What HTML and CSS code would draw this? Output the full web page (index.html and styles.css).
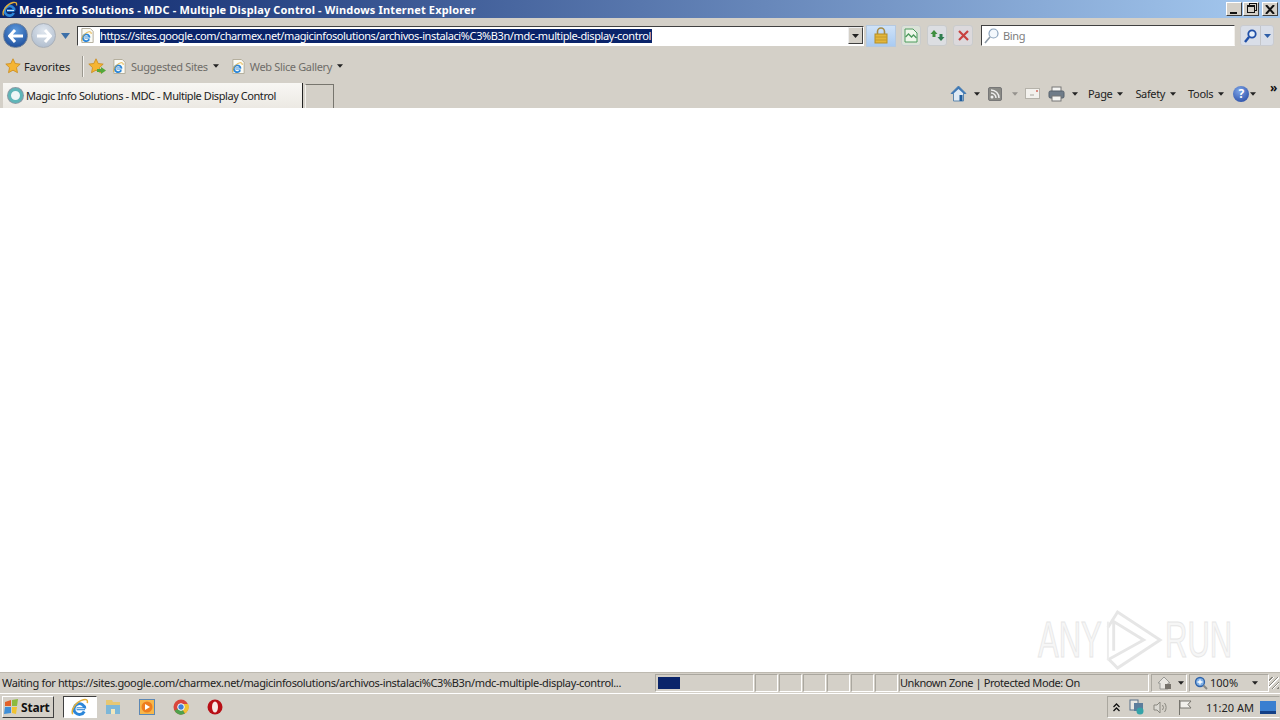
FILE: index.html
```html
<!DOCTYPE html>
<html lang="en">
<head>
  <meta charset="UTF-8">
  <title>Magic Info Solutions - MDC - Multiple Display Control</title>
  <link rel="stylesheet" href="styles.css">
</head>
<body>
  <svg class="defs" width="0" height="0">
    <symbol id="ie" viewBox="0 0 16 16">
      <path d="M12.500 9.500H5M12.300 9.500A4.800 4.800 0 1 0 11.800 12" fill="none" stroke="#2b86d9" stroke-width="2.600"/>
      <path d="M5 9.500h7" stroke="#fff" stroke-width=".8"/>
      <path d="M1.500 14.500C-.5 10 5 3 11 1.500c3-.7 4 .5 3.500 3" fill="none" stroke="#e2ae3a" stroke-width="1.300"/>
    </symbol>
    <symbol id="iepage" viewBox="0 0 16 16">
      <path d="M2 .5h9l3 3v12H2z" fill="#fbfbf5" stroke="#b0aa98"/>
      <use href="#ie" x="1" y="3" width="12" height="12"/>
    </symbol>
    <symbol id="star" viewBox="0 0 16 16">
      <path d="M8 .8l2.200 4.700 5 .6-3.700 3.500 1 5.100L8 12.200l-4.500 2.500 1-5.100L.8 6.100l5-.6z" fill="#f5b533" stroke="#c98a1c" stroke-width=".8"/>
    </symbol>
    <symbol id="caret" viewBox="0 0 7 4">
      <path d="M0 0h7L3.500 4z" fill="#222"/>
    </symbol>
  </svg>

  <div class="titlebar">
    <svg class="title-ie"><use href="#ie"/></svg>
    <span class="title-text">Magic Info Solutions - MDC - Multiple Display Control - Windows Internet Explorer</span>
    <div class="win-btns">
      <span class="win-btn"><i class="win-min"></i></span>
      <span class="win-btn"><i class="win-restore"></i></span>
      <span class="win-btn win-close">
        <svg width="10" height="9" viewBox="0 0 10 9"><path d="M1 0l8 9M9 0L1 9" stroke="#111" stroke-width="2"/></svg>
      </span>
    </div>
  </div>

  <div class="addressrow">
    <span class="nav-btn nav-back">
      <svg width="16" height="14" viewBox="0 0 16 14"><path d="M7 1L1.500 7 7 13M2 7h13" fill="none" stroke="#fff" stroke-width="3"/></svg>
    </span>
    <span class="nav-btn nav-forward">
      <svg width="16" height="14" viewBox="0 0 16 14"><path d="M9 1l5.500 6L9 13M14 7H1" fill="none" stroke="#fff" stroke-width="3"/></svg>
    </span>
    <svg class="nav-drop" viewBox="0 0 9 6"><path d="M0 0h9L4.500 6z" fill="#3c6fa8"/></svg>
    <div class="addressbox">
      <svg class="addr-icon"><use href="#iepage"/></svg>
      <span class="addr-url">https://sites.google.com/charmex.net/magicinfosolutions/archivos-instalaci%C3%B3n/mdc-multiple-display-control</span>
      <span class="combo-btn"><svg width="7" height="4"><use href="#caret"/></svg></span>
    </div>
    <span class="lock-btn">
      <svg width="14" height="17" viewBox="0 0 14 17">
        <path d="M3.500 8V4.500a3.500 3.500 0 0 1 7 0V8" fill="none" stroke="#a58b45" stroke-width="1.600"/>
        <rect x="1" y="7" width="12" height="9" fill="#e3b73c" stroke="#b58e26"/>
        <path d="M1 10h12M1 13h12" stroke="#c49a2c"/>
      </svg>
    </span>
    <span class="tool-btn tool-compat">
      <svg width="14" height="15" viewBox="0 0 14 15">
        <path d="M1 1h8l4 4v9H1z" fill="#eef7ea" stroke="#4c9a5c"/>
        <path d="M1.500 9l3-3 3 3 2-2 3 3" fill="none" stroke="#4c9a5c" stroke-width="1.300"/>
      </svg>
    </span>
    <span class="tool-btn">
      <svg width="15" height="13" viewBox="0 0 15 13">
        <path d="M4 1L.5 5h2v3h3V5h2z" fill="#3f8f3f"/>
        <path d="M11 12l3.500-4h-2V5h-3v3h-2z" fill="#2f7d4f"/>
      </svg>
    </span>
    <span class="tool-btn tool-stop">
      <svg width="11" height="11" viewBox="0 0 11 11"><path d="M1 1l9 9M10 1l-9 9" stroke="#c8423f" stroke-width="2.200"/></svg>
    </span>
    <div class="searchbox">
      <svg width="15" height="16" viewBox="0 0 15 16">
        <circle cx="9.500" cy="5.500" r="4.500" fill="#f4f8fc" stroke="#8ba3bd" stroke-width="1.200"/>
        <path d="M6 9l-5 6" stroke="#8d9aa6" stroke-width="1.600"/>
      </svg>
      <span class="search-text">Bing</span>
    </div>
    <span class="search-btn">
      <span class="search-go">
        <svg width="13" height="14" viewBox="0 0 13 14">
          <circle cx="8" cy="5" r="3.700" fill="#e4eefa" stroke="#1f4fa8" stroke-width="1.800"/>
          <path d="M5 8l-4 5" stroke="#1f4fa8" stroke-width="2.400"/>
        </svg>
      </span>
      <span class="search-drop"><svg width="7" height="4" viewBox="0 0 7 4"><path d="M0 0h7L3.500 4z" fill="#2f5fa8"/></svg></span>
    </span>
  </div>

  <div class="favrow">
    <svg class="fav-star"><use href="#star"/></svg>
    <span class="fav-label">Favorites</span>
    <span class="fav-sep"></span>
    <span class="fav-add">
      <svg width="16" height="16"><use href="#star"/></svg>
      <svg class="fav-arrow" width="9" height="7" viewBox="0 0 9 7"><path d="M0 2h4V0l5 3.500L4 7V5H0z" fill="#55a83a"/></svg>
    </span>
    <svg class="fav-page"><use href="#iepage"/></svg>
    <span class="fav-link">Suggested Sites</span>
    <svg class="caret fav-caret"><use href="#caret"/></svg>
    <svg class="fav-page fav-page-2"><use href="#iepage"/></svg>
    <span class="fav-link">Web Slice Gallery</span>
    <svg class="caret fav-caret"><use href="#caret"/></svg>
  </div>

  <div class="tabrow">
    <div class="tab">
      <span class="tab-spinner"></span>
      <span class="tab-title">Magic Info Solutions - MDC - Multiple Display Control</span>
    </div>
    <div class="new-tab"></div>
    <div class="commands">
      <svg class="cmd-icon" width="17" height="17" viewBox="0 0 17 17">
        <path d="M8.500 1L1 8.500h2.500V16h10V8.500H16z" fill="#dfeaf4" stroke="#5d86ad"/>
        <path d="M8.500 1L1 8.500l2 .5 5.500-5 5.500 5 2-.5z" fill="#3f78b4"/>
        <rect x="9.500" y="10" width="3" height="6" fill="#1f5c9c"/>
      </svg>
      <svg class="caret cmd-caret"><use href="#caret"/></svg>
      <svg class="cmd-icon cmd-feed" width="14" height="14" viewBox="0 0 14 14">
        <rect x=".5" y=".5" width="13" height="13" rx="1.500" fill="#8a8a86" stroke="#777"/>
        <circle cx="4" cy="10" r="1.500" fill="#eee"/>
        <path d="M3 6a5 5 0 0 1 5 5M3 3a8 8 0 0 1 8 8" fill="none" stroke="#eee" stroke-width="1.500"/>
      </svg>
      <svg class="caret cmd-caret cmd-off"><use href="#caret"/></svg>
      <svg class="cmd-icon cmd-mail" width="15" height="11" viewBox="0 0 15 11">
        <rect x=".5" y=".5" width="14" height="10" fill="#f3f1ed" stroke="#b5b2aa"/>
        <path d="M5 7h4" stroke="#a9a69f"/>
        <rect x="11" y="2" width="2" height="2" fill="#d98a80"/>
      </svg>
      <svg class="cmd-icon cmd-print" width="17" height="16" viewBox="0 0 17 16">
        <rect x="4" y="1" width="9" height="5" fill="#f4f4f2" stroke="#777"/>
        <rect x="1" y="5" width="15" height="7" rx="1.500" fill="#6f7c89" stroke="#56616c"/>
        <rect x="4" y="10" width="9" height="5" fill="#f4f4f2" stroke="#777"/>
      </svg>
      <svg class="caret cmd-caret"><use href="#caret"/></svg>
      <span class="cmd-label">Page</span>
      <svg class="caret cmd-caret-text"><use href="#caret"/></svg>
      <span class="cmd-label">Safety</span>
      <svg class="caret cmd-caret-text"><use href="#caret"/></svg>
      <span class="cmd-label">Tools</span>
      <svg class="caret cmd-caret-text"><use href="#caret"/></svg>
      <span class="cmd-help">?</span>
      <svg class="caret cmd-help-caret"><use href="#caret"/></svg>
      <span class="cmd-more">»</span>
    </div>
  </div>

  <main class="content">
    <div class="watermark">
      <span class="wm-word">ANY</span>
      <svg class="wm-mark" width="58" height="62" viewBox="0 0 60 62">
        <path d="M3 18L13 2l44 29-44 29-9-9 36-20L9 12v30" fill="none" stroke="#e6e6e6" stroke-width="3"/>
        <path d="M3 12v40" stroke="#ececec" stroke-width="2"/>
      </svg>
      <span class="wm-word">RUN</span>
    </div>
  </main>

  <div class="statusbar">
    <span class="st-cell st-main">Waiting for https://sites.google.com/charmex.net/magicinfosolutions/archivos-instalaci%C3%B3n/mdc-multiple-display-control...</span>
    <span class="st-cell st-progress"><i class="progress-fill" style="width: 22px"></i></span>
    <span class="st-cell st-small"></span>
    <span class="st-cell st-small"></span>
    <span class="st-cell st-small"></span>
    <span class="st-cell st-small"></span>
    <span class="st-cell st-small"></span>
    <span class="st-cell st-small"></span>
    <span class="st-cell st-zone">Unknown Zone | Protected Mode: On</span>
    <span class="st-cell st-security">
      <svg width="16" height="14" viewBox="0 0 16 14">
        <path d="M7 1L1 7h2v6h8V7h2z" fill="#e9e7e2" stroke="#9a9a96"/>
        <rect x="8" y="8" width="6" height="5" fill="#77736c"/>
      </svg>
      <svg class="caret"><use href="#caret"/></svg>
    </span>
    <span class="st-cell st-zoom">
      <svg width="14" height="14" viewBox="0 0 14 14">
        <circle cx="6" cy="6" r="4.500" fill="#7fb0e6" stroke="#2f62a8" stroke-width="1.300"/>
        <path d="M3.500 6h5M6 3.500v5" stroke="#fff" stroke-width="1.300"/>
        <path d="M9.500 9.500L13 13" stroke="#8a8a86" stroke-width="2"/>
      </svg>
      <span class="zoom-text">100%</span>
      <svg class="caret zoom-caret"><use href="#caret"/></svg>
    </span>
    <span class="st-grip"></span>
  </div>

  <div class="taskbar">
    <span class="start-btn">
      <svg width="16" height="16" viewBox="0 0 16 16">
        <path d="M1 3l6-2v6H1z" fill="#e2622a"/>
        <path d="M8 1l6-1-1 7H8z" fill="#8cba3f"/>
        <path d="M1 8h6v6l-7 1z" fill="#3f8fd8"/>
        <path d="M8 8h5l-1 7-4-1z" fill="#f0c331"/>
      </svg>
      <span class="start-text">Start</span>
    </span>
    <span class="task-btn task-active"><svg width="18" height="18"><use href="#ie"/></svg></span>
    <span class="task-btn">
      <svg width="16" height="16" viewBox="0 0 16 16">
        <path d="M1 1h6l1 2h7v12H1z" fill="#e7c772"/>
        <path d="M1 6h14v9H1z" fill="#7db7d8"/>
        <rect x="6" y="10" width="4" height="5" fill="#f2e7bd"/>
      </svg>
    </span>
    <span class="task-btn">
      <svg width="16" height="16" viewBox="0 0 16 16">
        <rect x=".5" y=".5" width="15" height="15" fill="#f7b74a" stroke="#5c87b4"/>
        <circle cx="8" cy="8" r="5.500" fill="#ee7d1e"/>
        <path d="M6 5l5 3-5 3z" fill="#fff"/>
      </svg>
    </span>
    <span class="task-btn">
      <svg width="16" height="16" viewBox="0 0 16 16">
        <circle cx="8" cy="8" r="7.500" fill="#d9463c"/>
        <path d="M8 8L1.500 11.800A7.500 7.500 0 0 0 12 14.500z" fill="#4fa14b"/>
        <path d="M8 8l4 6.500A7.500 7.500 0 0 0 15.200 5H8z" fill="#f1c232"/>
        <circle cx="8" cy="8" r="3.300" fill="#3f7fd8" stroke="#fff"/>
      </svg>
    </span>
    <span class="task-btn">
      <svg width="16" height="16" viewBox="0 0 16 16">
        <circle cx="8" cy="8" r="7.500" fill="#b80f16"/>
        <ellipse cx="8" cy="8" rx="3" ry="5.500" fill="#f7e9e6"/>
      </svg>
    </span>
    <div class="tray">
      <span class="tray-up">
        <svg width="7" height="9" viewBox="0 0 7 9"><path d="M.5 4l3-3 3 3M.5 8l3-3 3 3" fill="none" stroke="#111" stroke-width="1.300"/></svg>
      </span>
      <svg class="tray-icon" width="16" height="16" viewBox="0 0 16 16">
        <rect x="1" y="1" width="8" height="10" fill="#e9e7e2" stroke="#59708a"/>
        <rect x="5" y="4" width="9" height="8" fill="#5c7d9c"/>
        <circle cx="11" cy="12" r="3.500" fill="#36a3a8"/>
      </svg>
      <svg class="tray-icon" width="16" height="15" viewBox="0 0 16 15">
        <path d="M1 5h3l3-3v11l-3-3H1z" fill="#dcdad4" stroke="#8a8880"/>
        <path d="M9.500 5a4 4 0 0 1 0 5M11.500 3a7 7 0 0 1 0 9" fill="none" stroke="#8a8880"/>
      </svg>
      <svg class="tray-icon tray-flag" width="15" height="15" viewBox="0 0 15 15">
        <path d="M1.500 0v15" stroke="#77756e"/>
        <path d="M2 1h11l-3 3.500L13 8H2z" fill="#f2f0ec" stroke="#77756e"/>
      </svg>
      <span class="clock">11:20 AM</span>
      <svg class="tray-desktop" width="16" height="13" viewBox="0 0 16 13">
        <rect width="16" height="13" fill="#3a7fd0"/>
        <rect y="10" width="16" height="3" fill="#123f86"/>
      </svg>
    </div>
  </div>
</body>
</html>
```

FILE: styles.css
```css
* {
  box-sizing: border-box;
  margin: 0;
  padding: 0;
}

html,
body {
  height: 100%;
  overflow: hidden;
}

body {
  font-family: "Noto Sans", Arial, sans-serif;
  font-size: 11px;
  letter-spacing: -0.35px;
  color: #222;
  background: #d4d0c8;
  display: flex;
  flex-direction: column;
}

.defs {
  position: absolute;
}

svg {
  display: block;
  flex-shrink: 0;
}

/* Title bar */
.titlebar {
  height: 18px;
  display: flex;
  align-items: center;
  padding-left: 2px;
  background: linear-gradient(to right, #0a246a, #a6caf0);
}

.title-ie {
  width: 16px;
  height: 16px;
}

.title-text {
  margin-left: 1px;
  color: #fff;
  font-weight: 700;
  letter-spacing: 0.15px;
  white-space: nowrap;
}

.win-btns {
  margin-left: auto;
  margin-right: 2px;
  display: flex;
}

.win-btn {
  width: 16px;
  height: 14px;
  margin-left: 1px;
  background: #d4d0c8;
  border: 1px solid;
  border-color: #fff #404040 #404040 #fff;
  display: flex;
  align-items: center;
  justify-content: center;
}

.win-close {
  margin-left: 3px;
}

.win-min {
  width: 7px;
  height: 2px;
  background: #111;
  margin-top: 7px;
  margin-right: 2px;
}

.win-restore {
  width: 8px;
  height: 8px;
  border: 1px solid #111;
  border-top-width: 2px;
  background: #d4d0c8;
  box-shadow: 2px -2px 0 -1px #d4d0c8, 2px -2px 0 0 #111;
}

/* Address row */
.addressrow {
  height: 32px;
  display: flex;
  align-items: center;
  padding: 3px 0 0 3px;
}

.nav-btn {
  width: 25px;
  height: 25px;
  border-radius: 50%;
  display: flex;
  align-items: center;
  justify-content: center;
}

.nav-back {
  background: radial-gradient(circle at 50% 30%, #5f9de0, #13408f);
  border: 1px solid #6c7f99;
}

.nav-forward {
  margin-left: 3px;
  background: radial-gradient(circle at 50% 30%, #dfe6ee, #a9b7c9);
  border: 1px solid #aab0b8;
}

.nav-drop {
  width: 9px;
  height: 6px;
  margin-left: 5px;
}

.addressbox {
  width: 787px;
  height: 20px;
  margin-left: 7px;
  background: #fff;
  border: 1px solid;
  border-color: #404040 #fff #fff #404040;
  display: flex;
  align-items: center;
  padding-left: 2px;
}

.addr-icon {
  width: 15px;
  height: 15px;
}

.addr-url {
  margin-left: 5px;
  padding-right: 1px;
  height: 14px;
  line-height: 14px;
  letter-spacing: -0.39px;
  background: #0a246a;
  color: #fff;
  white-space: nowrap;
}

.combo-btn {
  margin-left: auto;
  width: 15px;
  height: 17px;
  background: #d4d0c8;
  border: 1px solid;
  border-color: #eee #404040 #404040 #eee;
  display: flex;
  align-items: center;
  justify-content: center;
}

.lock-btn {
  width: 30px;
  height: 22px;
  margin-left: 2px;
  background: linear-gradient(#cfe2f8, #a9cbf2);
  border: 1px solid #b5c9e0;
  display: flex;
  align-items: center;
  justify-content: center;
}

.tool-btn {
  width: 20px;
  height: 21px;
  margin-left: 6px;
  background: #dcdee2;
  border: 1px solid #c9cbcc;
  border-radius: 3px;
  display: flex;
  align-items: center;
  justify-content: center;
}

.tool-compat {
  background: #dbe2d8;
  margin-left: 5px;
}

.tool-stop {
  background: #dcd9dc;
}

.searchbox {
  width: 254px;
  height: 21px;
  margin-left: 8px;
  background: #fff;
  border: 1px solid;
  border-color: #404040 #f2f0ec #fff #404040;
  display: flex;
  align-items: center;
  padding-left: 2px;
}

.search-text {
  margin-left: 4px;
  color: #7d7d7d;
}

.search-btn {
  width: 34px;
  height: 21px;
  margin-left: 5px;
  display: flex;
  background: #d9dee8;
  border: 1px solid #c9cbd0;
  border-radius: 3px;
}

.search-go {
  width: 20px;
  display: flex;
  align-items: center;
  justify-content: center;
  border-right: 1px solid #c4c6ca;
}

.search-drop {
  flex: 1;
  display: flex;
  align-items: center;
  justify-content: center;
}

/* Favorites row */
.favrow {
  height: 32px;
  display: flex;
  align-items: center;
  padding-left: 5px;
}

.fav-star {
  width: 16px;
  height: 16px;
}

.fav-label {
  margin-left: 3px;
  letter-spacing: -0.1px;
}

.fav-sep {
  width: 1px;
  height: 21px;
  margin-left: 12px;
  background: #9b988f;
  box-shadow: 1px 0 0 #f4f2ee;
}

.fav-add {
  margin-left: 5px;
  width: 17px;
  height: 16px;
  position: relative;
}

.fav-arrow {
  position: absolute;
  right: -1px;
  bottom: 0;
}

.fav-page {
  width: 15px;
  height: 15px;
  margin-left: 7px;
}

.fav-page-2 {
  margin-left: 12px;
}

.fav-link {
  margin-left: 4px;
  color: #6f6d68;
}

.caret {
  width: 6px;
  height: 4px;
}

.fav-caret {
  margin-left: 5px;
}

/* Tab row */
.tabrow {
  height: 26px;
  display: flex;
  align-items: flex-end;
  padding-left: 3px;
}

.tab {
  width: 300px;
  height: 25px;
  display: flex;
  align-items: center;
  padding-left: 5px;
  background: linear-gradient(#f8f7f4, #ece9e3);
  border-right: 1px solid #222;
}

.tab-spinner {
  width: 15px;
  height: 15px;
  border-radius: 50%;
  border: 3px solid #5fb5b8;
  background: #eef6f6;
  box-shadow: 0 0 0 1px #8b9aa5;
}

.tab-title {
  margin-left: 3px;
  letter-spacing: -0.43px;
  white-space: nowrap;
}

.new-tab {
  width: 29px;
  height: 24px;
  margin-left: 2px;
  border: 1px solid #77756e;
  border-bottom: 0;
  border-left-color: #f4f2ee;
}

.commands {
  margin-left: auto;
  width: 330px;
  height: 26px;
  display: flex;
  align-items: center;
  padding-bottom: 3px;
  position: relative;
}

.cmd-caret {
  margin-left: 7px;
}

.cmd-off {
  opacity: .35;
  margin-left: 10px;
}

.cmd-feed {
  margin-left: 8px;
}

.cmd-mail {
  margin-left: 7px;
}

.cmd-print {
  margin-left: 8px;
}

.cmd-label {
  margin-left: 10px;
}

.cmd-caret-text {
  margin-left: 5px;
  margin-right: 2px;
}

.cmd-help {
  margin-left: 7px;
  width: 16px;
  height: 16px;
  border-radius: 50%;
  background: radial-gradient(circle at 40% 30%, #7fa6e8, #1b3f9c);
  color: #fff;
  font-weight: 700;
  font-size: 12px;
  line-height: 16px;
  text-align: center;
}

.cmd-help-caret {
  margin-left: 1px;
}

.cmd-more {
  position: absolute;
  right: 3px;
  top: 0;
  font-size: 12px;
  line-height: 12px;
  color: #111;
  font-weight: 700;
}

/* Page area */
.content {
  flex: 1;
  background: #fff;
  position: relative;
}

.watermark {
  position: absolute;
  left: 1038px;
  top: 501px;
  display: flex;
  align-items: center;
}

.wm-mark {
  margin: 0 2px 0 2px;
}

.wm-word {
  width: 65px;
  color: #f6f6f6;
  -webkit-text-stroke: 1px #e6e6e6;
  font-family: "Liberation Sans", Arial, sans-serif;
  font-size: 50px;
  line-height: 62px;
  letter-spacing: 0;
  white-space: nowrap;
  transform: scaleX(.62);
  transform-origin: left center;
}

/* Status bar */
.statusbar {
  height: 22px;
  display: flex;
  align-items: center;
  padding-bottom: 1px;
  border-top: 1px solid #bdb9b0;
  border-bottom: 1px solid #fff;
}

.st-cell {
  height: 18px;
  display: flex;
  align-items: center;
  white-space: nowrap;
  overflow: hidden;
  border: 1px solid;
  border-color: #aaa79f #fff #fff #aaa79f;
}

.st-main {
  width: 653px;
  padding-left: 1px;
  border-color: transparent;
}

.st-progress {
  width: 99px;
  margin-left: 2px;
  padding-left: 2px;
}

.progress-fill {
  display: block;
  height: 12px;
  background: #0a246a;
}

.st-small {
  width: 23px;
  margin-left: 1px;
}

.st-zone {
  width: 250px;
  margin-left: 1px;
  letter-spacing: -0.42px;
}

.st-security {
  width: 36px;
  margin-left: 2px;
  padding-left: 5px;
  gap: 5px;
}

.st-zoom {
  width: 80px;
  margin-left: 2px;
  padding-left: 4px;
}

.zoom-text {
  margin-left: 2px;
  letter-spacing: 0;
}

.zoom-caret {
  margin-left: 14px;
}

.st-grip {
  width: 10px;
  height: 12px;
  margin-left: auto;
  margin-right: 1px;
  background: repeating-linear-gradient(135deg, #d4d0c8 0 2px, #8a877f 2px 3px, #fff 3px 4px);
}

/* Task bar */
.taskbar {
  height: 26px;
  display: flex;
  align-items: center;
  padding-left: 2px;
}

.start-btn {
  width: 52px;
  height: 22px;
  display: flex;
  align-items: center;
  padding-left: 1px;
  background: #d4d0c8;
  border: 1px solid;
  border-color: #fff #404040 #404040 #fff;
}

.start-text {
  margin-left: 1px;
  font-weight: 700;
  font-size: 12px;
  letter-spacing: -0.2px;
  color: #111;
}

.task-btn {
  width: 34px;
  height: 22px;
  display: flex;
  align-items: center;
  justify-content: center;
}

.task-active {
  margin: 0 -1px 0 9px;
  background: #fff;
  border: 1px solid;
  border-color: #404040 #fff #fff #404040;
}

.tray {
  margin-left: auto;
  width: 173px;
  height: 22px;
  display: flex;
  align-items: center;
  border: 1px solid;
  border-color: #aaa79f transparent #fff #aaa79f;
  padding-left: 5px;
}

.tray-icon {
  margin-left: 8px;
}

.tray-up + .tray-icon,
.tray-flag {
  margin-left: 9px;
}

.clock {
  margin-left: 13px;
  letter-spacing: 0;
  white-space: nowrap;
}

.tray-desktop {
  margin-left: auto;
  margin-right: 3px;
}
```
